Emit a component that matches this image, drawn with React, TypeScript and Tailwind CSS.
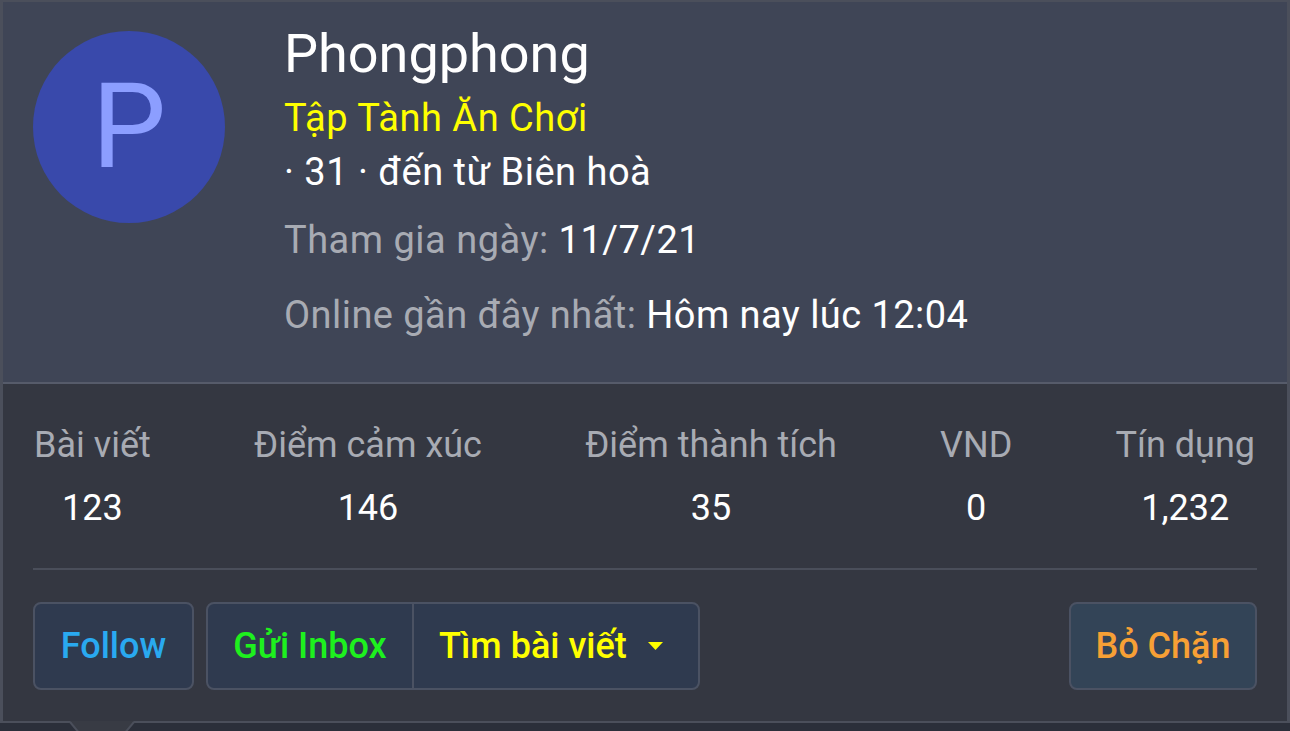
import React from "react";

const stats = [
  { label: "Bài viết", value: "123" },
  { label: "Điểm cảm xúc", value: "146" },
  { label: "Điểm thành tích", value: "35" },
  { label: "VND", value: "0" },
  { label: "Tín dụng", value: "1,232" },
];

export default function App() {
  return (
    <div
      className="relative h-[731px] w-[1290px] overflow-hidden bg-[#2b2f3a]"
      style={{ fontFamily: "Roboto, 'Noto Sans', sans-serif" }}
    >
      <div className="flex h-[723px] flex-col border-x-[3px] border-y-2 border-[#4b4f5b]">
        {/* header */}
        <div className="flex h-[382px] shrink-0 border-b-2 border-[#565b6a] bg-[#3f4556] pl-[30px]">
          <div className="mt-[29px] flex h-[192px] w-[192px] shrink-0 items-center justify-center rounded-full bg-[#3949ab]">
            <span className="text-[118px] leading-none text-[#8c9eff]">P</span>
          </div>
          <div className="ml-[59px] flex flex-col pt-[20px]">
            <div className="h-[69px] text-[54px] leading-[64px] text-white">
              Phongphong
            </div>
            <div className="text-[38px] leading-[54px] tracking-[0.5px] text-[#ffff00]">
              Tập Tành Ăn Chơi
            </div>
            <div className="text-[38px] leading-[54px] tracking-[0.5px] text-white">
              · 31 · đến từ Biên hoà
            </div>
            <div className="mt-[14px] text-[38px] leading-[54px] tracking-[0.5px] text-[#a8abb3]">
              Tham gia ngày: <span className="text-white">11/7/21</span>
            </div>
            <div className="mt-[21px] text-[38px] leading-[54px] tracking-[0.45px] text-[#a8abb3]">
              Online gần đây nhất:{" "}
              <span className="text-white">Hôm nay lúc 12:04</span>
            </div>
          </div>
        </div>

        {/* body */}
        <div className="flex flex-1 flex-col bg-[#343741] px-[30px] pt-[41px]">
          <div className="flex justify-between pl-[1px] pr-[2px]">
            {stats.map((s) => (
              <div key={s.label} className="flex flex-col items-center">
                <div className="text-[36px] leading-[40px] text-[#a8abb3]">
                  {s.label}
                </div>
                <div className="mt-[23px] text-[36px] leading-[40px] text-white">
                  {s.value}
                </div>
              </div>
            ))}
          </div>
          <div className="mt-[40px] h-[2px] bg-[#4a4e5a]" />
          <div className="mt-[32px] flex items-center">
            <button className="flex h-[88px] w-[161px] items-center justify-center rounded-[8px] border-2 border-[#4b5263] bg-[#2f3a4f] text-[36px] font-medium leading-[40px] text-[#29a9f0]">
              Follow
            </button>
            <div className="ml-[12px] flex h-[88px] overflow-hidden rounded-[8px] border-2 border-[#4b5263] bg-[#2f3a4f]">
              <button className="flex w-[206px] items-center justify-center border-r-2 border-[#4b5263] text-[36px] font-medium leading-[40px] text-[#1ef01e]">
                Gửi Inbox
              </button>
              <button className="flex w-[284px] items-center pl-[25px] text-[36px] font-medium leading-[40px] text-[#ffff00]">
                Tìm bài viết
                <svg
                  className="ml-[21px]"
                  width="15"
                  height="8"
                  viewBox="0 0 15 8"
                >
                  <polygon points="0,0 15,0 7.5,8" fill="#ffff00" />
                </svg>
              </button>
            </div>
            <button className="ml-auto flex h-[88px] w-[188px] items-center justify-center rounded-[8px] border-2 border-[#4b5263] bg-[#334457] text-[36px] font-medium leading-[40px] text-[#f7a035]">
              Bỏ Chặn
            </button>
          </div>
        </div>
      </div>

      {/* tooltip arrow */}
      <svg
        className="absolute left-[66px] top-[721px]"
        width="72"
        height="12"
        viewBox="0 0 72 12"
      >
        <polygon points="4,0 68,0 36,40" fill="#383b44" />
        <line x1="4" y1="1" x2="14" y2="13" stroke="#4b4f5b" strokeWidth="2" />
        <line x1="68" y1="1" x2="58" y2="13" stroke="#4b4f5b" strokeWidth="2" />
      </svg>
    </div>
  );
}
